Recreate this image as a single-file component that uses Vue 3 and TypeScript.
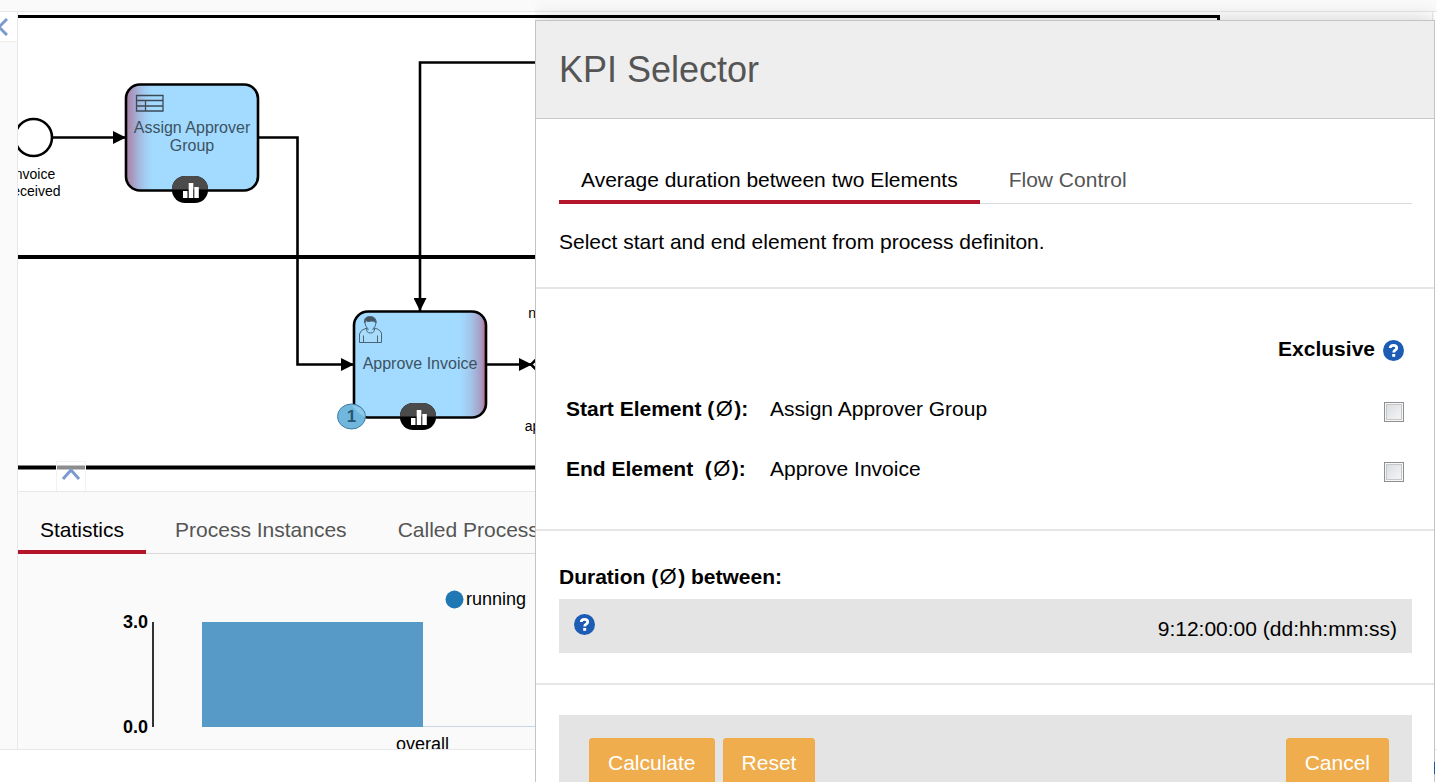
<script setup lang="ts">
import { ref } from 'vue'

interface ElementRow {
  id: string
  label: string
  name: string
}

const kpiTabs: string[] = ['Average duration between two Elements', 'Flow Control']
const detailTabs: string[] = ['Statistics', 'Process Instances', 'Called Process Definitions']
const activeKpiTab = ref(0)
const activeDetailTab = ref(0)

const rows: ElementRow[] = [
  { id: 'start', label: 'Start Element (', name: 'Assign Approver Group' },
  { id: 'end', label: 'End Element \u00a0(', name: 'Approve Invoice' },
]
const exclusive = ref<Record<string, boolean>>({ start: false, end: false })
</script>

<template>
  <div class="page">
    <div class="top-strip"></div>
    <div class="workspace">
      <aside class="sidebar">
        <button class="side-toggle" type="button" aria-label="Toggle sidebar">
          <svg width="16" height="18" viewBox="0 0 16 18"><path d="M15 1 L7 9 L15 17" fill="none" stroke="#7b9bd0" stroke-width="3" /></svg>
        </button>
      </aside>
      <main class="content">
        <div class="diagram">
          <svg class="canvas" aria-label="Process diagram">
            <defs>
              <linearGradient id="from-left" x1="0" x2="1" y1="0" y2="0">
                <stop offset="0" stop-color="#b0688c" stop-opacity="0.8" />
                <stop offset="0.05" stop-color="#a97fa6" stop-opacity="0.7" />
                <stop offset="0.21" stop-color="#a2c0e8" stop-opacity="0" />
              </linearGradient>
              <linearGradient id="from-right" x1="1" x2="0" y1="0" y2="0">
                <stop offset="0" stop-color="#c0406c" stop-opacity="0.9" />
                <stop offset="0.03" stop-color="#a97fa6" stop-opacity="0.75" />
                <stop offset="0.21" stop-color="#a2c0e8" stop-opacity="0" />
              </linearGradient>
              <marker id="arrow" viewBox="0 0 13 13" refX="13" refY="6.5" markerWidth="13" markerHeight="13" markerUnits="userSpaceOnUse" orient="auto">
                <path d="M0 0 L13 6.5 L0 13 Z" />
              </marker>
            </defs>
            <g transform="translate(-18 -12)">
              <g fill="none" stroke="#000" stroke-width="3">
                <path d="M10 16.5 H1218.5 V480" />
                <path d="M10 257 H1218" stroke-width="4" />
                <path d="M10 467.500 H1218" stroke-width="4" />
              </g>
              <g fill="none" stroke="#000" stroke-width="2.6">
                <circle cx="33.500" cy="137.500" r="18.500" fill="#fff" />
                <path d="M53 137.500 H126" marker-end="url(#arrow)" />
                <path d="M259 137.500 H297.500 V364.500 H354" marker-end="url(#arrow)" />
                <path d="M560 62.500 H420 V311" marker-end="url(#arrow)" />
                <path d="M487 364.500 H532" marker-end="url(#arrow)" />
                <path d="M560 336 L531 364.500 L560 393" />
              </g>
              <g class="event-label">
                <text x="33" y="179">Invoice</text>
                <text x="34" y="196">received</text>
                <text x="536" y="318">no</text>
                <text x="554" y="431">approved</text>
              </g>

              <g>
                <rect x="126" y="84.500" width="132" height="106" rx="14" fill="#a2dbff" />
                <rect x="126" y="84.500" width="132" height="106" rx="14" fill="url(#from-left)" stroke="#000" stroke-width="2.6" />
                <path d="M136.500 95.500 H163 V111 H136.500 Z M136.500 100.500 H163 M136.500 106 H163 M145.500 100.500 V111" fill="none" stroke="#3d4a55" stroke-width="1.300" />
                <text class="task-label" x="192" y="133">Assign Approver</text>
                <text class="task-label" x="192" y="151">Group</text>
              </g>
              <g>
                <rect x="354" y="311.500" width="132" height="106" rx="14" fill="#a2dbff" />
                <rect x="354" y="311.500" width="132" height="106" rx="14" fill="url(#from-right)" stroke="#000" stroke-width="2.6" />
                <g stroke="#4b6575" stroke-width="1">
                  <path d="M359.500 342.500 V334 Q360 330 366.500 328 Q366 333 370.500 333 Q375 333 374.500 328 Q381.500 330 381.500 334 V342.500 Z M363.500 342 V335.500 M377.500 342 V335.500" fill="#a9dcfb" />
                  <path d="M365 321 Q365 327 368 328.500 V330 M376 321 Q376 327 373 328.500 V330" fill="none" />
                  <path d="M364.500 323 Q363.500 316.500 370 316.500 Q376.500 316.500 376 323 Q374.500 320.500 371 321 Q367 322.500 366 320.500 Z" fill="#45545f" />
                </g>
                <text class="task-label" x="420" y="369">Approve Invoice</text>
              </g>

              <g v-for="b in [{ x: 172, y: 176 }, { x: 400, y: 403 }]" :key="b.x" :transform="`translate(${b.x} ${b.y})`">
                <rect width="36" height="27" rx="13" fill="#000" />
                <path d="M0 13.500 A13 13 0 0 1 13 0 H23 A13 13 0 0 1 36 13.500 Z" fill="#4b4b4b" />
                <path d="M11 15 h4.500 v7 h-4.500 Z M16.700 7 h4.600 v15 h-4.600 Z M22.300 11 h4.500 v11 h-4.500 Z" fill="#fff" />
              </g>

              <ellipse cx="351.500" cy="416.500" rx="14" ry="12.500" fill="#70b7dd" stroke="#3c7ba0" />
              <path d="M351 405 Q364 406 365 417 Q359 414 351 405 Z" fill="#8fc9e8" />
              <text class="count" x="351.500" y="422">1</text>
            </g>
          </svg>
          <button class="panel-toggle" type="button" aria-label="Collapse panel">
            <svg width="20" height="14" viewBox="0 0 20 14"><path d="M2 13 L10 4 L18 13" fill="none" stroke="#7b9bd0" stroke-width="3" /></svg>
          </button>
        </div>

        <section class="details">
          <div class="tabs" role="tablist">
            <button
              v-for="(tab, i) in detailTabs"
              :key="tab"
              type="button"
              role="tab"
              class="tab"
              :class="{ active: i === activeDetailTab }"
              @click="activeDetailTab = i"
            >{{ tab }}</button>
          </div>
          <div class="chart">
            <svg class="canvas" aria-label="Running instances">
              <circle cx="436.500" cy="45.500" r="9" fill="#1f77b4" />
              <text x="448" y="51">running</text>
              <g class="axis">
                <text x="130" y="74">3.0</text>
                <text x="130" y="179">0.0</text>
              </g>
              <rect x="134" y="68" width="2" height="105" fill="#333" />
              <rect x="184" y="172" width="500" height="1" fill="#c9d6e4" />
              <rect x="184" y="68" width="221" height="105" fill="#5799c7" />
              <text x="378" y="196">overall</text>
            </svg>
          </div>
        </section>
      </main>
      <div class="right-edge"></div>
    </div>
    <footer class="footer"></footer>

    <div class="modal" role="dialog" aria-labelledby="modal-title">
      <header class="modal-header">
        <h1 id="modal-title">KPI Selector</h1>
      </header>
      <div class="intro">
        <div class="tabs" role="tablist">
          <button
            v-for="(tab, i) in kpiTabs"
            :key="tab"
            type="button"
            role="tab"
            class="tab"
            :class="{ active: i === activeKpiTab }"
            @click="activeKpiTab = i"
          >{{ tab }}</button>
        </div>
        <p>Select start and end element from process definiton.</p>
      </div>

      <div class="elements">
        <table>
          <thead>
            <tr>
              <td></td>
              <td></td>
              <th class="exclusive" scope="col">
                <span>Exclusive</span>
                <svg class="help" viewBox="0 0 21 21"><circle cx="10.500" cy="10.500" r="10.500" fill="#1c5cb5" /><path d="M7.200 8 Q7.400 5.400 10.500 5.400 Q13.700 5.400 13.700 8 Q13.700 9.500 12 10.300 Q10.700 11 10.700 12.600" fill="none" stroke="#fff" stroke-width="2.800" /><rect x="9.200" y="14" width="3" height="2.800" fill="#fff" /></svg>
              </th>
            </tr>
          </thead>
          <tbody>
            <tr v-for="row in rows" :key="row.id">
              <th scope="row"><label :for="row.id">{{ row.label }}<span class="avg">Ø</span>):</label></th>
              <td>{{ row.name }}</td>
              <td class="tick"><input :id="row.id" v-model="exclusive[row.id]" type="checkbox" /></td>
            </tr>
          </tbody>
        </table>
      </div>

      <div class="duration">
        <h2>Duration (<span class="avg">Ø</span>) between:</h2>
        <div class="result">
          <svg class="help" viewBox="0 0 21 21"><circle cx="10.500" cy="10.500" r="10.500" fill="#1c5cb5" /><path d="M7.200 8 Q7.400 5.400 10.500 5.400 Q13.700 5.400 13.700 8 Q13.700 9.500 12 10.300 Q10.700 11 10.700 12.600" fill="none" stroke="#fff" stroke-width="2.800" /><rect x="9.200" y="14" width="3" height="2.800" fill="#fff" /></svg>
          <output>9:12:00:00 (dd:hh:mm:ss)</output>
        </div>
      </div>

      <div class="actions-wrap">
        <div class="actions">
          <button type="button" class="btn">Calculate</button>
          <button type="button" class="btn">Reset</button>
          <button type="button" class="btn last">Cancel</button>
        </div>
      </div>
    </div>
    <span class="edge-mark"></span>
  </div>
</template>

<style>
body {
  margin: 0;
}
</style>

<style scoped>
.page {
  position: relative;
  display: flex;
  flex-direction: column;
  height: 100vh;
  overflow: hidden;
  background: #fff;
  color: #000;
  font-family: "Liberation Sans", Arial, sans-serif;
  font-size: 21px;
  line-height: 30px;
}
.page * {
  box-sizing: border-box;
}
button {
  font: inherit;
  border: 0;
  background: none;
  padding: 0;
  cursor: pointer;
}
.top-strip {
  flex: none;
  height: 12px;
  background: #fafafa;
  border-bottom: 1px solid #e8e8e8;
}
.workspace {
  flex: 1;
  display: flex;
  min-height: 0;
}
.sidebar {
  flex: none;
  width: 18px;
  background: #fafafa;
  border-right: 1px solid #e8e8e8;
}
.side-toggle {
  display: flex;
  justify-content: flex-end;
  align-items: center;
  width: 17px;
  height: 30px;
  padding-right: 9px;
  background: #fff;
  border-bottom: 1px solid #f0ebe6;
  overflow: hidden;
}
.side-toggle svg {
  flex: none;
}
.content {
  flex: 1;
  display: flex;
  flex-direction: column;
  min-width: 0;
}
.right-edge {
  flex: none;
  width: 5px;
  border-left: 1px solid #e8e8e8;
}
.diagram {
  position: relative;
  flex: 1;
  min-height: 0;
}
.canvas {
  display: block;
  width: 100%;
  height: 100%;
}
.event-label text {
  font-size: 14px;
  text-anchor: middle;
}
.task-label {
  font-size: 16px;
  text-anchor: middle;
  fill: #3d525f;
}
.count {
  font-size: 17px;
  font-weight: bold;
  text-anchor: middle;
  fill: #27566f;
}
.panel-toggle {
  position: absolute;
  left: 38px;
  bottom: 0;
  display: flex;
  justify-content: center;
  width: 30px;
  height: 30px;
  padding-top: 4px;
  background: rgba(255, 255, 255, 0.55);
  border: 1px solid #f2f2f2;
  border-bottom: 0;
}
.details {
  flex: none;
  background: #fafafa;
  border-top: 1px solid #e8e8e8;
  padding-top: 16px;
}
.tabs {
  display: flex;
  gap: 7px;
  height: 46px;
  border-bottom: 1px solid #dadada;
}
.tab {
  flex: none;
  height: 46px;
  padding: 2px 22px 0;
  border-bottom: 4px solid transparent;
  color: #555;
  white-space: nowrap;
}
.tab.active {
  color: #000;
  border-bottom-color: #b5152b;
}
.chart {
  height: 195px;
}
.chart text {
  font-size: 18px;
}
.axis text {
  font-weight: bold;
  text-anchor: end;
}
.footer {
  flex: none;
  height: 33px;
  border-top: 1px solid #e8e8e8;
}
.modal {
  position: absolute;
  top: 20px;
  left: 535px;
  right: 2px;
  background: #fff;
  border: 1px solid #c4c4c4;
  box-shadow: 0 0 20px rgba(0, 0, 0, 0.2);
  clip-path: inset(-20px 0 0 0);
}
.modal-header {
  height: 98px;
  padding: 29px 23px 0;
  background: #eee;
  border-bottom: 1px solid #c8c8c8;
}
h1 {
  margin: 0;
  font-size: 36px;
  font-weight: normal;
  line-height: 40px;
  color: #555;
}
.intro,
.elements,
.duration {
  border-bottom: 2px solid #e5e5e5;
}
.intro {
  padding: 39px 22px 30px 23px;
}
.intro p {
  margin: 23px 0 0;
}
.elements {
  padding: 30px 22px 30px 23px;
}
table {
  width: 100%;
  border-collapse: collapse;
}
tr {
  height: 60px;
}
th,
td {
  padding: 0;
  text-align: left;
  vertical-align: middle;
}
th[scope="row"] {
  width: 211px;
  padding-left: 7px;
}
.exclusive {
  text-align: right;
  padding-right: 8px;
}
.exclusive .help {
  margin-left: 8px;
  vertical-align: middle;
}
.help {
  width: 21px;
  height: 21px;
}
.avg {
  display: inline-block;
  width: 20px;
  font-size: 22px;
  font-weight: normal;
  text-align: center;
}
.tick {
  text-align: right;
  padding: 12px 8px 0 0;
}
input {
  appearance: none;
  display: inline-block;
  width: 20px;
  height: 20px;
  margin: 0;
  border: 1px solid #8e8f8f;
  background: linear-gradient(135deg, #d8dade, #f8f8f8);
  box-shadow: inset 0 0 0 1px #f6f6f6, inset 0 0 0 2px #c4c6ca;
}
.duration {
  padding: 31px 22px 30px 23px;
}
h2 {
  margin: 0 0 7px;
  font-size: 21px;
  font-weight: bold;
  line-height: 30px;
}
.result {
  display: flex;
  justify-content: space-between;
  height: 54px;
  padding: 15px;
  background: #e4e4e4;
}
.actions-wrap {
  padding: 30px 22px 30px 23px;
}
.actions {
  display: flex;
  gap: 8px;
  padding: 23px 23px 23px 30px;
  background: #e4e4e4;
}
.btn {
  height: 50px;
  padding: 0 18px;
  border: 1px solid #f0ab48;
  border-radius: 3px;
  background: #f0ad4e;
  color: #fff;
}
.last {
  margin-left: auto;
}
.edge-mark {
  position: absolute;
  right: 2px;
  bottom: 8px;
  width: 1px;
  height: 12px;
  background: #1c5c9c;
}
</style>
